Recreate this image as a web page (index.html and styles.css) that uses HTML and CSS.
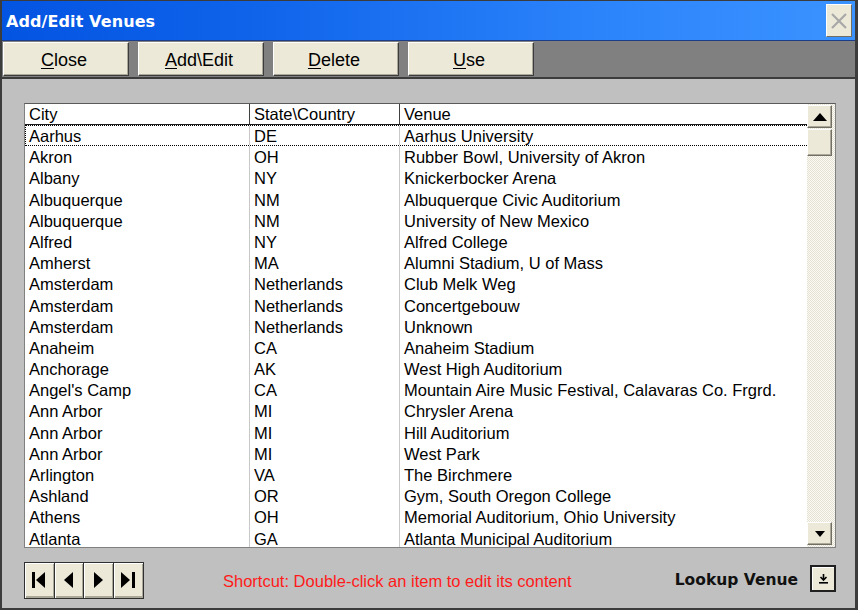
FILE: index.html
```html
<!DOCTYPE html>
<html>
<head>
<meta charset="utf-8">
<link rel="stylesheet" href="styles.css">
</head>
<body>
<div class="window">
  <div class="titlebar">
    <span class="title">Add/Edit Venues</span>
    <span class="xbtn"><svg width="18" height="18" viewBox="0 0 18 18"><path d="M2 2 L16 16 M16 2 L2 16" stroke="#a8a8a8" stroke-width="2.2" fill="none"/></svg></span>
  </div>
  <div class="toolbar">
    <button class="tbtn"><u>C</u>lose</button>
    <button class="tbtn"><u>A</u>dd\Edit</button>
    <button class="tbtn"><u>D</u>elete</button>
    <button class="tbtn"><u>U</u>se</button>
  </div>
  <div class="body">
    <div class="listbox">
      <div class="listmain">
        <div class="row head">
          <div class="c1">City</div><div class="c2">State\Country</div><div class="c3">Venue</div>
        </div>
        <div class="rows">
          <div class="row sel"><div class="c1">Aarhus</div><div class="c2">DE</div><div class="c3">Aarhus University</div></div>
          <div class="row"><div class="c1">Akron</div><div class="c2">OH</div><div class="c3">Rubber Bowl, University of Akron</div></div>
          <div class="row"><div class="c1">Albany</div><div class="c2">NY</div><div class="c3">Knickerbocker Arena</div></div>
          <div class="row"><div class="c1">Albuquerque</div><div class="c2">NM</div><div class="c3">Albuquerque Civic Auditorium</div></div>
          <div class="row"><div class="c1">Albuquerque</div><div class="c2">NM</div><div class="c3">University of New Mexico</div></div>
          <div class="row"><div class="c1">Alfred</div><div class="c2">NY</div><div class="c3">Alfred College</div></div>
          <div class="row"><div class="c1">Amherst</div><div class="c2">MA</div><div class="c3">Alumni Stadium, U of Mass</div></div>
          <div class="row"><div class="c1">Amsterdam</div><div class="c2">Netherlands</div><div class="c3">Club Melk Weg</div></div>
          <div class="row"><div class="c1">Amsterdam</div><div class="c2">Netherlands</div><div class="c3">Concertgebouw</div></div>
          <div class="row"><div class="c1">Amsterdam</div><div class="c2">Netherlands</div><div class="c3">Unknown</div></div>
          <div class="row"><div class="c1">Anaheim</div><div class="c2">CA</div><div class="c3">Anaheim Stadium</div></div>
          <div class="row"><div class="c1">Anchorage</div><div class="c2">AK</div><div class="c3">West High Auditorium</div></div>
          <div class="row"><div class="c1">Angel's Camp</div><div class="c2">CA</div><div class="c3">Mountain Aire Music Festival, Calavaras Co. Frgrd.</div></div>
          <div class="row"><div class="c1">Ann Arbor</div><div class="c2">MI</div><div class="c3">Chrysler Arena</div></div>
          <div class="row"><div class="c1">Ann Arbor</div><div class="c2">MI</div><div class="c3">Hill Auditorium</div></div>
          <div class="row"><div class="c1">Ann Arbor</div><div class="c2">MI</div><div class="c3">West Park</div></div>
          <div class="row"><div class="c1">Arlington</div><div class="c2">VA</div><div class="c3">The Birchmere</div></div>
          <div class="row"><div class="c1">Ashland</div><div class="c2">OR</div><div class="c3">Gym, South Oregon College</div></div>
          <div class="row"><div class="c1">Athens</div><div class="c2">OH</div><div class="c3">Memorial Auditorium, Ohio University</div></div>
          <div class="row"><div class="c1">Atlanta</div><div class="c2">GA</div><div class="c3">Atlanta Municipal Auditorium</div></div>
        </div>
      </div>
      <div class="scrollbar">
        <div class="sbtn"><svg width="14" height="8" viewBox="0 0 14 8"><path d="M7 0 L14 8 L0 8 Z" fill="#000"/></svg></div>
        <div class="sbtn thumb"></div>
        <div class="track"></div>
        <div class="sbtn"><svg width="10" height="6" viewBox="0 0 10 6"><path d="M0 0 L10 0 L5 6 Z" fill="#000"/></svg></div>
      </div>
    </div>
    <div class="footer">
      <div class="nav">
        <div class="nbtn"><svg width="14" height="16" viewBox="0 0 14 16"><rect x="0" y="0" width="3" height="16" fill="#000"/><path d="M13 0 L13 16 L4 8 Z" fill="#000"/></svg></div>
        <div class="nbtn"><svg width="10" height="16" viewBox="0 0 10 16"><path d="M9 0 L9 16 L0 8 Z" fill="#000"/></svg></div>
        <div class="nbtn"><svg width="10" height="16" viewBox="0 0 10 16"><path d="M1 0 L1 16 L10 8 Z" fill="#000"/></svg></div>
        <div class="nbtn"><svg width="14" height="16" viewBox="0 0 14 16"><path d="M0 0 L0 16 L9 8 Z" fill="#000"/><rect x="11" y="0" width="3" height="16" fill="#000"/></svg></div>
      </div>
      <div class="hint">Shortcut: Double-click an item to edit its content</div>
      <div class="lookup">Lookup Venue</div>
      <div class="lbtn"><svg width="9" height="10" viewBox="0 0 9 10"><path d="M4.5 0 L4.5 5 M1.5 3 L4.5 6 L7.5 3" stroke="#000" stroke-width="1.6" fill="none"/><rect x="0" y="8" width="9" height="1.6" fill="#000"/></svg></div>
    </div>
  </div>
</div>
</body>
</html>
```

FILE: styles.css
```css
* { box-sizing: border-box; }
html, body { margin: 0; padding: 0; }
body {
  width: 858px;
  height: 610px;
  overflow: hidden;
  background: #808080;
  font-family: "Liberation Sans", Arial, sans-serif;
}
.window {
  width: 858px;
  height: 610px;
  display: flex;
  flex-direction: column;
  border-left: 2px solid #3c3c3c;
  border-right: 3px solid #3c3c3c;
  border-top: 1px solid #3c3c3c;
}
.titlebar {
  height: 40px;
  flex: none;
  display: flex;
  align-items: center;
  justify-content: space-between;
  padding: 0 3px 0 4px;
  background: linear-gradient(to right, #0454e2 0%, #0f64ea 30%, #2c84fb 70%, #3a93ff 100%);
  border-bottom: 1px solid #1c3c88;
}
.title {
  color: #fff;
  font-family: "DejaVu Sans", Verdana, sans-serif;
  font-weight: bold;
  font-size: 16px;
  letter-spacing: 0.1px;
  padding-top: 1px;
}
.xbtn {
  width: 26px;
  height: 33px;
  background: #ece9d8;
  border: 1px solid;
  border-color: #fff #716f64 #716f64 #fff;
  display: flex;
  align-items: center;
  justify-content: center;
}
.toolbar {
  height: 38px;
  flex: none;
  background: #808080;
  display: flex;
  align-items: stretch;
  gap: 9px;
  padding: 1px 0 1px 1px;
  border-bottom: 2px solid #3c3c3c;
}
.tbtn {
  width: 126px;
  background: #ece9d8;
  border: 1px solid;
  border-color: #fff #3c3c3c #3c3c3c #fff;
  box-shadow: inset -1px -1px 0 #aca899;
  font-family: "Liberation Sans", Arial, sans-serif;
  font-size: 18px;
  color: #000;
  padding: 2px 4px 0 0;
  margin: 0;
}
.tbtn u { text-decoration: underline; text-underline-offset: 2px; }
.body {
  flex: 1;
  background: #c0c0c0;
  padding: 24px 19px 0 22px;
  display: flex;
  flex-direction: column;
  border-bottom: 2px solid #3c3c3c;
}
.listbox {
  width: 812px;
  height: 445px;
  background: #fff;
  border: 1px solid #808080;
  border-top-color: #5a5a5a;
  display: flex;
}
.listmain {
  flex: 1;
  display: flex;
  flex-direction: column;
  overflow: hidden;
}
.row {
  display: flex;
  height: 21.2px;
  font-size: 16.5px;
  line-height: 21px;
  color: #000;
  white-space: nowrap;
}
.row > div { padding-left: 4px; padding-top: 1px; overflow: hidden; }
.c1 { width: 225px; border-right: 1px solid #c8c8c8; }
.c2 { width: 150px; border-right: 1px solid #c8c8c8; }
.c3 { flex: 1; }
.row.head {
  height: 21px;
  border-bottom: 1px solid #1a1a1a;
  flex: none;
}
.row.head > div { padding-top: 0; }
.row.head .c1, .row.head .c2 { border-right-color: #404040; }
.row.sel {
  border-top: 1px dotted #000;
  border-bottom: 1px dotted #000;
  border-left: 1px dotted #000;
  line-height: 19px;
}
.row.sel .c1 { width: 224px; padding-left: 3px; }
.rows { flex: 1; }
.scrollbar {
  width: 28px;
  flex: none;
  display: flex;
  flex-direction: column;
  padding: 1px 3px 2px 0;
  gap: 1px;
  background-color: #f6f4ec;
  background-image: repeating-conic-gradient(#e4e0d2 0 25%, #fbfaf5 0 50%);
  background-size: 2px 2px;
}
.sbtn {
  height: 23px;
  flex: none;
  background: #ece9d8;
  border: 1px solid;
  border-color: #fff #716f64 #716f64 #fff;
  box-shadow: inset -1px -1px 0 #aca899;
  display: flex;
  align-items: center;
  justify-content: center;
}
.sbtn.thumb { height: 27px; }
.track { flex: 1; }
.footer {
  flex: 1;
  display: flex;
  align-items: center;
  padding-top: 4px;
}
.nav {
  display: flex;
  border: 1px solid #303030;
  height: 37px;
}
.nbtn {
  width: 29.5px;
  background: #ece9d8;
  border-right: 1px solid #303030;
  box-shadow: inset 1px 1px 0 #fff, inset -1px -2px 0 #aca899;
  display: flex;
  align-items: center;
  justify-content: center;
}
.nbtn:last-child { border-right: none; }
.hint {
  color: #ff1a1a;
  font-size: 16.5px;
  margin-left: 79px;
  padding-top: 2px;
}
.lookup {
  margin-left: auto;
  font-family: "DejaVu Sans", Verdana, sans-serif;
  font-weight: bold;
  font-size: 15.5px;
  color: #111;
  margin-right: 12px;
}
.lbtn {
  width: 26px;
  height: 27px;
  background: #ece9d8;
  border: 2px solid #202020;
  box-shadow: inset 1px 1px 0 #fff;
  display: flex;
  align-items: center;
  justify-content: center;
  margin-right: 0;
  margin-bottom: 3px;
}
```
